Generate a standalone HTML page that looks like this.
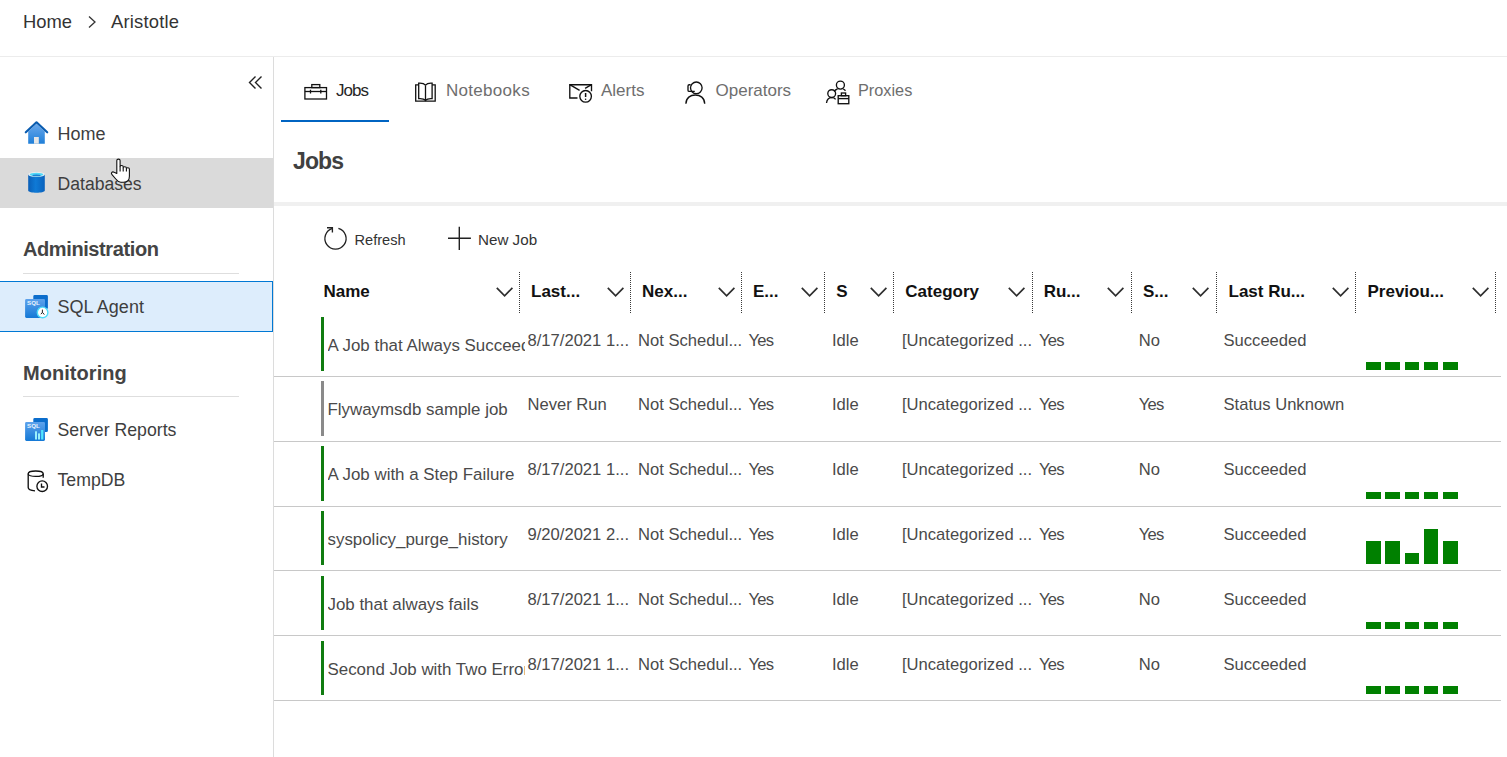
<!DOCTYPE html>
<html><head><meta charset="utf-8"><style>
html,body{margin:0;padding:0;}
body{width:1507px;height:757px;overflow:hidden;position:relative;background:#fff;font-family:"Liberation Sans", sans-serif;}
.t{position:absolute;white-space:nowrap;}
svg{overflow:visible}
</style></head><body>
<div class="t" style="left:23px;top:13.42px;font-size:18.4px;line-height:18.4px;color:#333;font-weight:400;">Home</div>
<svg style="position:absolute;left:86px;top:14px" width="12" height="16" viewBox="0 0 12 16"><path d="M3 2.5 L9 8 L3 13.5" fill="none" stroke="#333" stroke-width="1.3"/></svg>
<div class="t" style="left:111px;top:13.42px;font-size:18.4px;line-height:18.4px;color:#333;font-weight:400;letter-spacing:0.2px">Aristotle</div>
<div style="position:absolute;left:0px;top:56px;width:1507px;height:1px;background:#ececec"></div>
<div style="position:absolute;left:273px;top:57px;width:1px;height:700px;background:#dcdcdc"></div>
<svg style="position:absolute;left:246px;top:74px" width="20" height="18" viewBox="0 0 20 18"><path d="M9.5 2.5 L3.5 8.5 L9.5 14.5 M15.5 2.5 L9.5 8.5 L15.5 14.5" fill="none" stroke="#222" stroke-width="1.4"/></svg>
<svg style="position:absolute;left:24px;top:120px" width="25" height="25" viewBox="0 0 25 25"><defs><linearGradient id="hg" x1="0" y1="0" x2="0" y2="1"><stop offset="0" stop-color="#6aa8ec"/><stop offset="1" stop-color="#1f7fd8"/></linearGradient></defs><path d="M4.2 11.5 L12.5 3.8 L20.8 11.5 V23.7 H4.2 Z" fill="url(#hg)"/><path d="M1.8 12.3 L12.5 2.3 L23.2 12.3" fill="none" stroke="#0a5cb0" stroke-width="2.2" stroke-linecap="round" stroke-linejoin="round"/><rect x="10" y="17" width="4.8" height="6.7" fill="#e6e6e6"/></svg>
<div class="t" style="left:57.5px;top:124.76px;font-size:18px;line-height:18px;color:#3e3e3e;font-weight:400;">Home</div>
<div style="position:absolute;left:0px;top:158px;width:273px;height:50px;background:#dadada"></div>
<svg style="position:absolute;left:26px;top:170px" width="22" height="25" viewBox="0 0 22 25"><defs><linearGradient id="dg" x1="0" y1="0" x2="1" y2="0"><stop offset="0" stop-color="#0a5fb8"/><stop offset="0.45" stop-color="#0f7ad6"/><stop offset="1" stop-color="#0a62bd"/></linearGradient></defs><path d="M2.2 4.5 V20.5 C2.2 23.5 18.8 23.5 18.8 20.5 V4.5 Z" fill="url(#dg)"/><ellipse cx="10.5" cy="4.5" rx="8.3" ry="2.6" fill="#f0f0f0"/><ellipse cx="10.5" cy="4.6" rx="6.8" ry="1.8" fill="#50d8f8"/><ellipse cx="10.5" cy="5.4" rx="4" ry="0.9" fill="#1e7fd0"/></svg>
<div class="t" style="left:57.5px;top:176.10px;font-size:17.6px;line-height:17.6px;color:#3e3e3e;font-weight:400;">Databases</div>
<div class="t" style="left:23px;top:239.07px;font-size:20px;line-height:20px;color:#444;font-weight:700;letter-spacing:-0.4px">Administration</div>
<div style="position:absolute;left:23px;top:273px;width:216px;height:1px;background:#dedede"></div>
<div style="position:absolute;left:-1px;top:281px;width:274px;height:51px;background:#ddedfc;border:1px solid #0078d4;box-sizing:border-box"></div>
<svg style="position:absolute;left:25px;top:295px" width="25" height="25" viewBox="0 0 25 25"><defs><linearGradient id="sg295" x1="0" y1="0" x2="0" y2="1"><stop offset="0" stop-color="#5ea2ec"/><stop offset="1" stop-color="#1479d6"/></linearGradient></defs><rect x="8.3" y="0.1" width="14.6" height="14" rx="1.3" fill="#0b6dcc"/><rect x="0.1" y="3.9" width="19.9" height="19" rx="1.3" fill="url(#sg295)"/><text x="2" y="10.3" font-family="Liberation Sans" font-size="6.2" font-weight="700" fill="#e8f2fc">SQL</text><circle cx="17.6" cy="17.4" r="5.3" fill="#fff" stroke="#4fdcf8" stroke-width="1.4"/><path d="M17.4 14.6 V17.3 L19.3 19.6 M17.4 17.3 L15.9 19.2" stroke="#222" stroke-width="1" fill="none"/></svg>
<div class="t" style="left:57.5px;top:297.76px;font-size:18px;line-height:18px;color:#3e3e3e;font-weight:400;">SQL Agent</div>
<div class="t" style="left:23px;top:362.57px;font-size:20px;line-height:20px;color:#444;font-weight:700;letter-spacing:0.05px">Monitoring</div>
<div style="position:absolute;left:23px;top:396px;width:216px;height:1px;background:#dedede"></div>
<svg style="position:absolute;left:25px;top:418px" width="25" height="25" viewBox="0 0 25 25"><defs><linearGradient id="sg418" x1="0" y1="0" x2="0" y2="1"><stop offset="0" stop-color="#5ea2ec"/><stop offset="1" stop-color="#1479d6"/></linearGradient></defs><rect x="8.3" y="0.1" width="14.6" height="14" rx="1.3" fill="#0b6dcc"/><rect x="0.1" y="3.9" width="19.9" height="19" rx="1.3" fill="url(#sg418)"/><text x="2" y="10.3" font-family="Liberation Sans" font-size="6.2" font-weight="700" fill="#e8f2fc">SQL</text><rect x="10" y="13.3" width="2" height="8.2" fill="#9af0fb"/><rect x="13" y="15.4" width="2" height="6.1" fill="#9af0fb"/><rect x="16.1" y="12" width="2.2" height="9.5" fill="#50e6ff"/></svg>
<div class="t" style="left:57.5px;top:422.01px;font-size:17.7px;line-height:17.7px;color:#3e3e3e;font-weight:400;">Server Reports</div>
<svg style="position:absolute;left:26px;top:468px" width="24" height="26" viewBox="0 0 24 26"><g fill="none" stroke="#111" stroke-width="1.35"><ellipse cx="9.7" cy="5.7" rx="7.5" ry="2.7"/><path d="M2.2 5.7 V19.5 C2.2 21.4 5.5 22.6 9 22.8"/><path d="M17.2 5.7 V9.8"/><circle cx="16.2" cy="18.2" r="5.3"/><path d="M15.5 15.6 V19 H18.5"/></g></svg>
<div class="t" style="left:57.5px;top:472.01px;font-size:17.7px;line-height:17.7px;color:#3e3e3e;font-weight:400;">TempDB</div>
<svg style="position:absolute;left:107.5px;top:155.7px" width="24" height="30" viewBox="0 0 24 30"><path d="M8.8 17.5 L8.8 4.6 C8.8 2.6 12.1 2.6 12.1 4.6 L12.1 10.6 C12.1 9.2 15.2 9.2 15.2 10.8 L15.2 11.7 C15.2 10.4 18.4 10.4 18.4 12 L18.4 12.6 C18.4 11.3 21.4 11.4 21.4 13 L21.4 20.3 C21.4 24 19.2 26.3 15.6 26.3 L12.8 26.3 C10.8 26.3 9.5 25 7.8 23 L4 18.7 C2.6 17.1 4.2 15.1 6.2 16.3 Z" fill="#fff" stroke="#111" stroke-width="1.1" stroke-linejoin="round"/><path d="M12.1 10.6 V15.5 M15.2 11.7 V15.5 M18.4 12.6 V15.5" stroke="#111" stroke-width="1.1"/></svg>
<svg style="position:absolute;left:302px;top:82px" width="27" height="20" viewBox="0 0 27 20"><g fill="none" stroke="#111" stroke-width="1.3"><rect x="2.9" y="5.6" width="21.6" height="11.4"/><rect x="9.8" y="2.6" width="8" height="3"/><path d="M2.9 9.5 H24.5"/><path d="M8.5 7.8 V11.5 M18.8 7.8 V11.5"/></g></svg>
<div class="t" style="left:336px;top:81.61px;font-size:17px;line-height:17px;color:#262626;font-weight:400;letter-spacing:-1px">Jobs</div>
<div style="position:absolute;left:281px;top:120px;width:108px;height:2px;background:#0064c2"></div>
<svg style="position:absolute;left:412px;top:80px" width="27" height="25" viewBox="0 0 27 25"><g fill="none" stroke="#111" stroke-width="1.3"><path d="M6.7 4.8 H3.7 V21.2 H23.2 V4.8 H20.1"/><path d="M13.5 5.2 C12.2 3.6 9.5 3 6.7 3.2 V18.6 C9.5 18.4 12.2 18.9 13.5 20.3"/><path d="M13.5 5.2 C14.8 3.6 17.5 3 20.1 3.2 V18.6 C17.5 18.4 14.8 18.9 13.5 20.3"/><path d="M13.5 5.2 V21.2"/></g></svg>
<div class="t" style="left:446px;top:81.61px;font-size:17px;line-height:17px;color:#6e6e6e;font-weight:400;letter-spacing:0.3px">Notebooks</div>
<svg style="position:absolute;left:566px;top:80px" width="30" height="25" viewBox="0 0 30 25"><g fill="none" stroke="#111" stroke-width="1.35"><path d="M11.5 18 H3.8 V4.7 H25.5 V11.2"/><path d="M3.8 4.7 L13.6 10.4"/><path d="M25.5 4.7 L19.1 8.3"/><circle cx="19.6" cy="16.3" r="5.8"/></g><path d="M19.6 13 V17" stroke="#111" stroke-width="1.5"/><circle cx="19.6" cy="19.2" r="0.8" fill="#111"/></svg>
<div class="t" style="left:601px;top:81.61px;font-size:17px;line-height:17px;color:#6e6e6e;font-weight:400;">Alerts</div>
<svg style="position:absolute;left:683px;top:78px" width="26" height="28" viewBox="0 0 26 28"><g fill="none" stroke="#111" stroke-width="1.35"><circle cx="13.3" cy="9.8" r="5.8"/><path d="M7.6 6.7 H6.2 C5.3 6.7 5 7.2 5 8 V12.2 C5 13 5.4 13.4 6.2 13.4 H11.8"/><path d="M2.9 25.7 C3 19.8 7.4 17 12.3 17 C17.2 17 21.6 19.8 21.7 25.7"/></g></svg>
<div class="t" style="left:715.5px;top:81.61px;font-size:17px;line-height:17px;color:#6e6e6e;font-weight:400;">Operators</div>
<svg style="position:absolute;left:824px;top:78px" width="28" height="28" viewBox="0 0 28 28"><g fill="none" stroke="#111" stroke-width="1.35"><circle cx="16.4" cy="7.1" r="4"/><path d="M13.5 11 C12 11.5 11 12.3 10 13.5 M19.3 11 C20.3 11.6 21 12.2 21.5 12.7"/><circle cx="7.7" cy="15.6" r="3.9"/><path d="M2.5 25 C3 21 5 19.6 7.7 19.6 C9.8 19.6 11 20.3 11.6 21.3"/><rect x="14.2" y="17.7" width="10.6" height="8"/><rect x="17.4" y="15" width="4.2" height="2.7"/><path d="M14.2 20.6 H24.8"/></g></svg>
<div class="t" style="left:858px;top:82.20px;font-size:16.3px;line-height:16.3px;color:#6e6e6e;font-weight:400;">Proxies</div>
<div class="t" style="left:293px;top:149.53px;font-size:23px;line-height:23px;color:#404040;font-weight:700;letter-spacing:-0.9px">Jobs</div>
<div style="position:absolute;left:274px;top:202px;width:1233px;height:4px;background:#f0f0f0"></div>
<svg style="position:absolute;left:322px;top:225px" width="27" height="27" viewBox="0 0 27 27"><g fill="none" stroke="#222" stroke-width="1.35"><path d="M16.4 3.4 A10.6 10.6 0 1 1 10.6 3.4"/><path d="M5 2.7 H10.4 V7.6"/></g></svg>
<div class="t" style="left:354.5px;top:232.64px;font-size:14.6px;line-height:14.6px;color:#333;font-weight:400;">Refresh</div>
<svg style="position:absolute;left:446px;top:225px" width="27" height="27" viewBox="0 0 27 27"><path d="M13.3 1.8 V24.9 M2 13.3 H24.9" stroke="#222" stroke-width="1.4"/></svg>
<div class="t" style="left:478px;top:232.13px;font-size:15.2px;line-height:15.2px;color:#333;font-weight:400;">New Job</div>
<div class="t" style="left:323.5px;top:282.81px;font-size:17px;line-height:17px;color:#111;font-weight:700;">Name</div>
<div class="t" style="left:531px;top:282.81px;font-size:17px;line-height:17px;color:#111;font-weight:700;">Last...</div>
<div class="t" style="left:642px;top:282.81px;font-size:17px;line-height:17px;color:#111;font-weight:700;">Nex...</div>
<div class="t" style="left:753px;top:282.81px;font-size:17px;line-height:17px;color:#111;font-weight:700;">E...</div>
<div class="t" style="left:836.3px;top:282.81px;font-size:17px;line-height:17px;color:#111;font-weight:700;">S</div>
<div class="t" style="left:905.3px;top:282.81px;font-size:17px;line-height:17px;color:#111;font-weight:700;">Category</div>
<div class="t" style="left:1043.7px;top:282.81px;font-size:17px;line-height:17px;color:#111;font-weight:700;">Ru...</div>
<div class="t" style="left:1143px;top:282.81px;font-size:17px;line-height:17px;color:#111;font-weight:700;">S...</div>
<div class="t" style="left:1228.5px;top:282.81px;font-size:17px;line-height:17px;color:#111;font-weight:700;">Last Ru...</div>
<div class="t" style="left:1367.5px;top:282.81px;font-size:17px;line-height:17px;color:#111;font-weight:700;">Previou...</div>
<div style="position:absolute;left:519px;top:272px;width:1px;height:41px;background:repeating-linear-gradient(#3a3a3a 0 1px,transparent 1px 2px)"></div>
<svg style="position:absolute;left:495.7px;top:286.8px" width="18" height="12" viewBox="0 0 18 12"><path d="M0.8 0.9 L8.6 8.8 L16.4 0.9" fill="none" stroke="#2e2e2e" stroke-width="1.7"/></svg>
<div style="position:absolute;left:630px;top:272px;width:1px;height:41px;background:repeating-linear-gradient(#3a3a3a 0 1px,transparent 1px 2px)"></div>
<svg style="position:absolute;left:606.7px;top:286.8px" width="18" height="12" viewBox="0 0 18 12"><path d="M0.8 0.9 L8.6 8.8 L16.4 0.9" fill="none" stroke="#2e2e2e" stroke-width="1.7"/></svg>
<div style="position:absolute;left:741px;top:272px;width:1px;height:41px;background:repeating-linear-gradient(#3a3a3a 0 1px,transparent 1px 2px)"></div>
<svg style="position:absolute;left:717.7px;top:286.8px" width="18" height="12" viewBox="0 0 18 12"><path d="M0.8 0.9 L8.6 8.8 L16.4 0.9" fill="none" stroke="#2e2e2e" stroke-width="1.7"/></svg>
<div style="position:absolute;left:824px;top:272px;width:1px;height:41px;background:repeating-linear-gradient(#3a3a3a 0 1px,transparent 1px 2px)"></div>
<svg style="position:absolute;left:800.7px;top:286.8px" width="18" height="12" viewBox="0 0 18 12"><path d="M0.8 0.9 L8.6 8.8 L16.4 0.9" fill="none" stroke="#2e2e2e" stroke-width="1.7"/></svg>
<div style="position:absolute;left:893px;top:272px;width:1px;height:41px;background:repeating-linear-gradient(#3a3a3a 0 1px,transparent 1px 2px)"></div>
<svg style="position:absolute;left:869.7px;top:286.8px" width="18" height="12" viewBox="0 0 18 12"><path d="M0.8 0.9 L8.6 8.8 L16.4 0.9" fill="none" stroke="#2e2e2e" stroke-width="1.7"/></svg>
<div style="position:absolute;left:1032px;top:272px;width:1px;height:41px;background:repeating-linear-gradient(#3a3a3a 0 1px,transparent 1px 2px)"></div>
<svg style="position:absolute;left:1008.2px;top:286.8px" width="18" height="12" viewBox="0 0 18 12"><path d="M0.8 0.9 L8.6 8.8 L16.4 0.9" fill="none" stroke="#2e2e2e" stroke-width="1.7"/></svg>
<div style="position:absolute;left:1131px;top:272px;width:1px;height:41px;background:repeating-linear-gradient(#3a3a3a 0 1px,transparent 1px 2px)"></div>
<svg style="position:absolute;left:1107.2px;top:286.8px" width="18" height="12" viewBox="0 0 18 12"><path d="M0.8 0.9 L8.6 8.8 L16.4 0.9" fill="none" stroke="#2e2e2e" stroke-width="1.7"/></svg>
<div style="position:absolute;left:1216px;top:272px;width:1px;height:41px;background:repeating-linear-gradient(#3a3a3a 0 1px,transparent 1px 2px)"></div>
<svg style="position:absolute;left:1192.2px;top:286.8px" width="18" height="12" viewBox="0 0 18 12"><path d="M0.8 0.9 L8.6 8.8 L16.4 0.9" fill="none" stroke="#2e2e2e" stroke-width="1.7"/></svg>
<div style="position:absolute;left:1355px;top:272px;width:1px;height:41px;background:repeating-linear-gradient(#3a3a3a 0 1px,transparent 1px 2px)"></div>
<svg style="position:absolute;left:1331.7px;top:286.8px" width="18" height="12" viewBox="0 0 18 12"><path d="M0.8 0.9 L8.6 8.8 L16.4 0.9" fill="none" stroke="#2e2e2e" stroke-width="1.7"/></svg>
<div style="position:absolute;left:1495px;top:272px;width:1px;height:41px;background:repeating-linear-gradient(#3a3a3a 0 1px,transparent 1px 2px)"></div>
<svg style="position:absolute;left:1471.7px;top:286.8px" width="18" height="12" viewBox="0 0 18 12"><path d="M0.8 0.9 L8.6 8.8 L16.4 0.9" fill="none" stroke="#2e2e2e" stroke-width="1.7"/></svg>
<div style="position:absolute;left:321px;top:317px;width:3px;height:54px;background:#107c10"></div>
<div class="t" style="left:327.5px;top:338.19px;width:197px;overflow:hidden;font-size:16.9px;line-height:16.9px;color:#4a4a4a;white-space:nowrap">A Job that Always Succeeded</div>
<div class="t" style="left:527.5px;top:333.44px;font-size:16.6px;line-height:16.6px;color:#4a4a4a;font-weight:400;">8/17/2021 1...</div>
<div class="t" style="left:638px;top:333.44px;font-size:16.6px;line-height:16.6px;color:#4a4a4a;font-weight:400;">Not Schedul...</div>
<div class="t" style="left:748.5px;top:333.44px;font-size:16.6px;line-height:16.6px;color:#4a4a4a;font-weight:400;letter-spacing:-0.8px">Yes</div>
<div class="t" style="left:832px;top:333.44px;font-size:16.6px;line-height:16.6px;color:#4a4a4a;font-weight:400;">Idle</div>
<div class="t" style="left:902px;top:333.44px;font-size:16.6px;line-height:16.6px;color:#4a4a4a;font-weight:400;">[Uncategorized ...</div>
<div class="t" style="left:1039px;top:333.44px;font-size:16.6px;line-height:16.6px;color:#4a4a4a;font-weight:400;letter-spacing:-0.8px">Yes</div>
<div class="t" style="left:1138.8px;top:333.44px;font-size:16.6px;line-height:16.6px;color:#4a4a4a;font-weight:400;">No</div>
<div class="t" style="left:1223.5px;top:333.44px;font-size:16.6px;line-height:16.6px;color:#4a4a4a;font-weight:400;">Succeeded</div>
<div style="position:absolute;left:1366px;top:362px;width:15px;height:8px;background:#008000"></div>
<div style="position:absolute;left:1385px;top:362px;width:15px;height:8px;background:#008000"></div>
<div style="position:absolute;left:1405px;top:362px;width:14px;height:8px;background:#008000"></div>
<div style="position:absolute;left:1424px;top:362px;width:14px;height:8px;background:#008000"></div>
<div style="position:absolute;left:1443px;top:362px;width:15px;height:8px;background:#008000"></div>
<div style="position:absolute;left:274px;top:376px;width:1227px;height:1px;background:#c8c8c8"></div>
<div style="position:absolute;left:321px;top:381px;width:3px;height:55px;background:#8a8a8a"></div>
<div class="t" style="left:327.5px;top:402.19px;width:197px;overflow:hidden;font-size:16.9px;line-height:16.9px;color:#4a4a4a;white-space:nowrap">Flywaymsdb sample job</div>
<div class="t" style="left:527.5px;top:397.44px;font-size:16.6px;line-height:16.6px;color:#4a4a4a;font-weight:400;">Never Run</div>
<div class="t" style="left:638px;top:397.44px;font-size:16.6px;line-height:16.6px;color:#4a4a4a;font-weight:400;">Not Schedul...</div>
<div class="t" style="left:748.5px;top:397.44px;font-size:16.6px;line-height:16.6px;color:#4a4a4a;font-weight:400;letter-spacing:-0.8px">Yes</div>
<div class="t" style="left:832px;top:397.44px;font-size:16.6px;line-height:16.6px;color:#4a4a4a;font-weight:400;">Idle</div>
<div class="t" style="left:902px;top:397.44px;font-size:16.6px;line-height:16.6px;color:#4a4a4a;font-weight:400;">[Uncategorized ...</div>
<div class="t" style="left:1039px;top:397.44px;font-size:16.6px;line-height:16.6px;color:#4a4a4a;font-weight:400;letter-spacing:-0.8px">Yes</div>
<div class="t" style="left:1138.8px;top:397.44px;font-size:16.6px;line-height:16.6px;color:#4a4a4a;font-weight:400;letter-spacing:-0.8px">Yes</div>
<div class="t" style="left:1223.5px;top:397.44px;font-size:16.6px;line-height:16.6px;color:#4a4a4a;font-weight:400;">Status Unknown</div>
<div style="position:absolute;left:274px;top:441px;width:1227px;height:1px;background:#c8c8c8"></div>
<div style="position:absolute;left:321px;top:446px;width:3px;height:55px;background:#107c10"></div>
<div class="t" style="left:327.5px;top:467.19px;width:197px;overflow:hidden;font-size:16.9px;line-height:16.9px;color:#4a4a4a;white-space:nowrap">A Job with a Step Failure</div>
<div class="t" style="left:527.5px;top:462.44px;font-size:16.6px;line-height:16.6px;color:#4a4a4a;font-weight:400;">8/17/2021 1...</div>
<div class="t" style="left:638px;top:462.44px;font-size:16.6px;line-height:16.6px;color:#4a4a4a;font-weight:400;">Not Schedul...</div>
<div class="t" style="left:748.5px;top:462.44px;font-size:16.6px;line-height:16.6px;color:#4a4a4a;font-weight:400;letter-spacing:-0.8px">Yes</div>
<div class="t" style="left:832px;top:462.44px;font-size:16.6px;line-height:16.6px;color:#4a4a4a;font-weight:400;">Idle</div>
<div class="t" style="left:902px;top:462.44px;font-size:16.6px;line-height:16.6px;color:#4a4a4a;font-weight:400;">[Uncategorized ...</div>
<div class="t" style="left:1039px;top:462.44px;font-size:16.6px;line-height:16.6px;color:#4a4a4a;font-weight:400;letter-spacing:-0.8px">Yes</div>
<div class="t" style="left:1138.8px;top:462.44px;font-size:16.6px;line-height:16.6px;color:#4a4a4a;font-weight:400;">No</div>
<div class="t" style="left:1223.5px;top:462.44px;font-size:16.6px;line-height:16.6px;color:#4a4a4a;font-weight:400;">Succeeded</div>
<div style="position:absolute;left:1366px;top:492px;width:15px;height:7px;background:#008000"></div>
<div style="position:absolute;left:1385px;top:492px;width:15px;height:7px;background:#008000"></div>
<div style="position:absolute;left:1405px;top:492px;width:14px;height:7px;background:#008000"></div>
<div style="position:absolute;left:1424px;top:492px;width:14px;height:7px;background:#008000"></div>
<div style="position:absolute;left:1443px;top:492px;width:15px;height:7px;background:#008000"></div>
<div style="position:absolute;left:274px;top:506px;width:1227px;height:1px;background:#c8c8c8"></div>
<div style="position:absolute;left:321px;top:511px;width:3px;height:54px;background:#107c10"></div>
<div class="t" style="left:327.5px;top:532.19px;width:197px;overflow:hidden;font-size:16.9px;line-height:16.9px;color:#4a4a4a;white-space:nowrap">syspolicy_purge_history</div>
<div class="t" style="left:527.5px;top:527.44px;font-size:16.6px;line-height:16.6px;color:#4a4a4a;font-weight:400;">9/20/2021 2...</div>
<div class="t" style="left:638px;top:527.44px;font-size:16.6px;line-height:16.6px;color:#4a4a4a;font-weight:400;">Not Schedul...</div>
<div class="t" style="left:748.5px;top:527.44px;font-size:16.6px;line-height:16.6px;color:#4a4a4a;font-weight:400;letter-spacing:-0.8px">Yes</div>
<div class="t" style="left:832px;top:527.44px;font-size:16.6px;line-height:16.6px;color:#4a4a4a;font-weight:400;">Idle</div>
<div class="t" style="left:902px;top:527.44px;font-size:16.6px;line-height:16.6px;color:#4a4a4a;font-weight:400;">[Uncategorized ...</div>
<div class="t" style="left:1039px;top:527.44px;font-size:16.6px;line-height:16.6px;color:#4a4a4a;font-weight:400;letter-spacing:-0.8px">Yes</div>
<div class="t" style="left:1138.8px;top:527.44px;font-size:16.6px;line-height:16.6px;color:#4a4a4a;font-weight:400;letter-spacing:-0.8px">Yes</div>
<div class="t" style="left:1223.5px;top:527.44px;font-size:16.6px;line-height:16.6px;color:#4a4a4a;font-weight:400;">Succeeded</div>
<div style="position:absolute;left:1366px;top:541px;width:15px;height:23px;background:#008000"></div>
<div style="position:absolute;left:1385px;top:541px;width:15px;height:23px;background:#008000"></div>
<div style="position:absolute;left:1405px;top:553px;width:14px;height:11px;background:#008000"></div>
<div style="position:absolute;left:1424px;top:529px;width:14px;height:35px;background:#008000"></div>
<div style="position:absolute;left:1443px;top:541px;width:15px;height:23px;background:#008000"></div>
<div style="position:absolute;left:274px;top:570px;width:1227px;height:1px;background:#c8c8c8"></div>
<div style="position:absolute;left:321px;top:576px;width:3px;height:54px;background:#107c10"></div>
<div class="t" style="left:327.5px;top:597.19px;width:197px;overflow:hidden;font-size:16.9px;line-height:16.9px;color:#4a4a4a;white-space:nowrap">Job that always fails</div>
<div class="t" style="left:527.5px;top:592.44px;font-size:16.6px;line-height:16.6px;color:#4a4a4a;font-weight:400;">8/17/2021 1...</div>
<div class="t" style="left:638px;top:592.44px;font-size:16.6px;line-height:16.6px;color:#4a4a4a;font-weight:400;">Not Schedul...</div>
<div class="t" style="left:748.5px;top:592.44px;font-size:16.6px;line-height:16.6px;color:#4a4a4a;font-weight:400;letter-spacing:-0.8px">Yes</div>
<div class="t" style="left:832px;top:592.44px;font-size:16.6px;line-height:16.6px;color:#4a4a4a;font-weight:400;">Idle</div>
<div class="t" style="left:902px;top:592.44px;font-size:16.6px;line-height:16.6px;color:#4a4a4a;font-weight:400;">[Uncategorized ...</div>
<div class="t" style="left:1039px;top:592.44px;font-size:16.6px;line-height:16.6px;color:#4a4a4a;font-weight:400;letter-spacing:-0.8px">Yes</div>
<div class="t" style="left:1138.8px;top:592.44px;font-size:16.6px;line-height:16.6px;color:#4a4a4a;font-weight:400;">No</div>
<div class="t" style="left:1223.5px;top:592.44px;font-size:16.6px;line-height:16.6px;color:#4a4a4a;font-weight:400;">Succeeded</div>
<div style="position:absolute;left:1366px;top:622px;width:15px;height:7px;background:#008000"></div>
<div style="position:absolute;left:1385px;top:622px;width:15px;height:7px;background:#008000"></div>
<div style="position:absolute;left:1405px;top:622px;width:14px;height:7px;background:#008000"></div>
<div style="position:absolute;left:1424px;top:622px;width:14px;height:7px;background:#008000"></div>
<div style="position:absolute;left:1443px;top:622px;width:15px;height:7px;background:#008000"></div>
<div style="position:absolute;left:274px;top:635px;width:1227px;height:1px;background:#c8c8c8"></div>
<div style="position:absolute;left:321px;top:641px;width:3px;height:54px;background:#107c10"></div>
<div class="t" style="left:327.5px;top:662.19px;width:197px;overflow:hidden;font-size:16.9px;line-height:16.9px;color:#4a4a4a;white-space:nowrap">Second Job with Two Errors</div>
<div class="t" style="left:527.5px;top:657.44px;font-size:16.6px;line-height:16.6px;color:#4a4a4a;font-weight:400;">8/17/2021 1...</div>
<div class="t" style="left:638px;top:657.44px;font-size:16.6px;line-height:16.6px;color:#4a4a4a;font-weight:400;">Not Schedul...</div>
<div class="t" style="left:748.5px;top:657.44px;font-size:16.6px;line-height:16.6px;color:#4a4a4a;font-weight:400;letter-spacing:-0.8px">Yes</div>
<div class="t" style="left:832px;top:657.44px;font-size:16.6px;line-height:16.6px;color:#4a4a4a;font-weight:400;">Idle</div>
<div class="t" style="left:902px;top:657.44px;font-size:16.6px;line-height:16.6px;color:#4a4a4a;font-weight:400;">[Uncategorized ...</div>
<div class="t" style="left:1039px;top:657.44px;font-size:16.6px;line-height:16.6px;color:#4a4a4a;font-weight:400;letter-spacing:-0.8px">Yes</div>
<div class="t" style="left:1138.8px;top:657.44px;font-size:16.6px;line-height:16.6px;color:#4a4a4a;font-weight:400;">No</div>
<div class="t" style="left:1223.5px;top:657.44px;font-size:16.6px;line-height:16.6px;color:#4a4a4a;font-weight:400;">Succeeded</div>
<div style="position:absolute;left:1366px;top:686px;width:15px;height:8px;background:#008000"></div>
<div style="position:absolute;left:1385px;top:686px;width:15px;height:8px;background:#008000"></div>
<div style="position:absolute;left:1405px;top:686px;width:14px;height:8px;background:#008000"></div>
<div style="position:absolute;left:1424px;top:686px;width:14px;height:8px;background:#008000"></div>
<div style="position:absolute;left:1443px;top:686px;width:15px;height:8px;background:#008000"></div>
<div style="position:absolute;left:274px;top:700px;width:1227px;height:1px;background:#c8c8c8"></div>
</body></html>
